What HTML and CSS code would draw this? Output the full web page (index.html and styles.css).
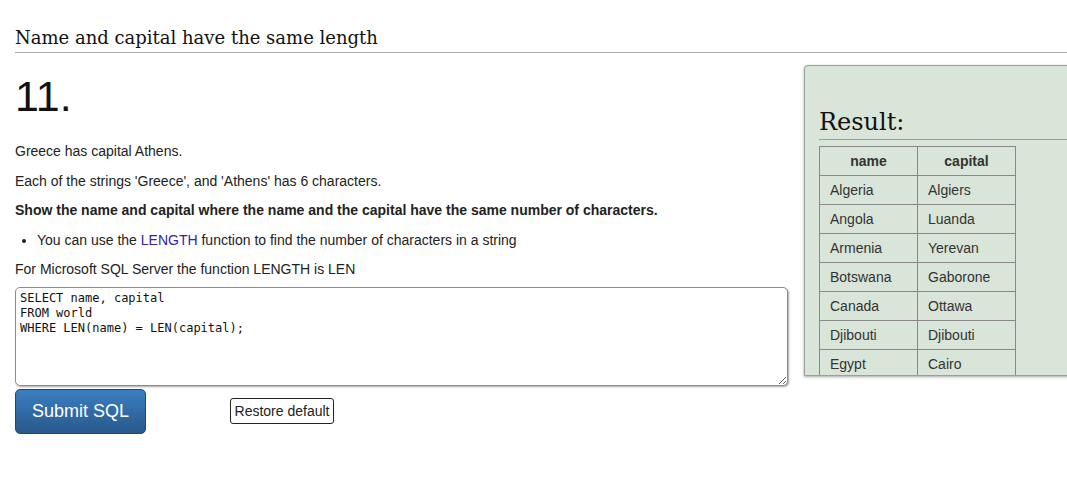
FILE: index.html
```html
<!DOCTYPE html>
<html>
<head>
<meta charset="utf-8">
<link rel="stylesheet" href="styles.css">
</head>
<body>
<div class="page">
  <h2 class="title">Name and capital have the same length</h2>
  <div class="content">
    <div class="question">
      <div class="qnum">11.</div>
      <p class="txt">Greece has capital Athens.</p>
      <p class="txt">Each of the strings 'Greece', and 'Athens' has 6 characters.</p>
      <p class="txt bold">Show the name and capital where the name and the capital have the same number of characters.</p>
      <ul class="tips">
        <li>You can use the <a class="kw" href="#">LENGTH</a> function to find the number of characters in a string</li>
      </ul>
      <p class="txt">For Microsoft SQL Server the function LENGTH is LEN</p>
      <textarea class="sql" spellcheck="false">SELECT name, capital
FROM world
WHERE LEN(name) = LEN(capital);</textarea>
      <div class="actions">
        <button class="submit">Submit SQL</button>
        <button class="restore">Restore default</button>
      </div>
    </div>
    <div class="result">
      <h3 class="rtitle">Result:</h3>
      <div class="rbody">
        <table class="rtable">
          <tr><th>name</th><th>capital</th></tr>
          <tr><td>Algeria</td><td>Algiers</td></tr>
          <tr><td>Angola</td><td>Luanda</td></tr>
          <tr><td>Armenia</td><td>Yerevan</td></tr>
          <tr><td>Botswana</td><td>Gaborone</td></tr>
          <tr><td>Canada</td><td>Ottawa</td></tr>
          <tr><td>Djibouti</td><td>Djibouti</td></tr>
          <tr><td>Egypt</td><td>Cairo</td></tr>
        </table>
      </div>
    </div>
  </div>
</div>
</body>
</html>
```
FILE: styles.css
```css
html, body {
  margin: 0;
  padding: 0;
  background: #fff;
  overflow: hidden;
}
.page {
  padding-left: 15px;
  font-family: "Liberation Sans", Arial, sans-serif;
  color: #222;
}
.title {
  margin: 0;
  padding-top: 25px;
  font-family: "DejaVu Serif", Georgia, serif;
  font-weight: normal;
  font-size: 18px;
  line-height: 26px;
  color: #111;
  border-bottom: 1px solid #a8abb3;
  padding-bottom: 1px;
}
.content {
  display: flex;
  align-items: flex-start;
  margin-top: 12px;
}
.question {
  width: 773px;
  flex: none;
  padding-top: 7px;
}
.qnum {
  font-size: 43px;
  line-height: 48px;
  color: #111;
  margin-bottom: 23px;
}
.txt {
  margin: 0 0 13.5px 0;
  font-size: 14px;
  line-height: 16px;
  color: #222;
}
.bold {
  font-weight: bold;
}
.tips {
  margin: 0 0 13.5px 0;
  padding-left: 22px;
  font-size: 14px;
  line-height: 16px;
  color: #222;
}
.kw {
  color: #3322aa;
  text-decoration: none;
}
.sql {
  display: block;
  box-sizing: border-box;
  width: 773px;
  height: 99px;
  margin: -4px 0 0 0;
  padding: 3px 4px;
  border: 1px solid #8a8f96;
  border-radius: 5px;
  box-shadow: 1px 1px 2px rgba(0,0,0,0.35);
  font-family: "DejaVu Sans Mono", Consolas, monospace;
  font-size: 12px;
  line-height: 15px;
  color: #111;
  resize: vertical;
  outline: none;
}
.actions {
  display: flex;
  align-items: center;
  gap: 84px;
  margin-top: 3px;
}
.submit {
  box-sizing: border-box;
  width: 131px;
  height: 45px;
  border: 1px solid #1f4a73;
  border-radius: 5px;
  background: linear-gradient(#3b7ec0, #28598c);
  color: #fff;
  font-family: "Liberation Sans", Arial, sans-serif;
  font-size: 18px;
  padding: 0;
}
.restore {
  box-sizing: border-box;
  height: 26px;
  width: 104px;
  padding: 0 2px;
  border: 1px solid #222;
  border-radius: 3px;
  background: #fff;
  color: #222;
  font-family: "Liberation Sans", Arial, sans-serif;
  font-size: 14px;
}
.result {
  flex: none;
  margin-left: 16px;
  width: 300px;
  height: 311px;
  box-sizing: border-box;
  background: #dae5d9;
  border: 1px solid #9aa09a;
  border-top-left-radius: 4px;
  box-shadow: 0 1px 3px rgba(0,0,0,0.35);
  padding-left: 14px;
  overflow: hidden;
}
.rtitle {
  margin: 0;
  padding-top: 40px;
  font-family: "DejaVu Serif", Georgia, serif;
  font-weight: normal;
  font-size: 24px;
  line-height: 33px;
  color: #111;
  border-bottom: 1px solid #9a9f9a;
  padding-bottom: 0;
}
.rbody {
  margin-top: 6px;
  height: 230px;
  overflow: hidden;
}
.rtable {
  border-collapse: collapse;
  font-size: 14px;
  color: #333;
}
.rtable th, .rtable td {
  border: 1px solid #888;
  height: 29px;
  box-sizing: border-box;
  padding: 0 10px;
  width: 98px;
}
.rtable th {
  text-align: center;
  font-weight: bold;
  color: #333;
}
.rtable td {
  text-align: left;
}
```
